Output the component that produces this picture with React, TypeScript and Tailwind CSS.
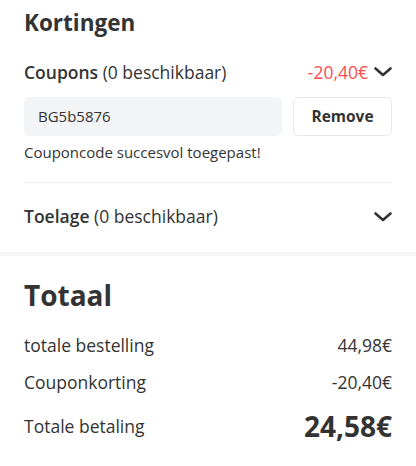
function Chevron() {
  return (
    <svg width="18" height="10" viewBox="0 0 18 10" fill="none" className="shrink-0">
      <path d="M1.5 1.5 L9 8 L16.5 1.5" stroke="#333" strokeWidth="2.6" strokeLinecap="round" strokeLinejoin="round" />
    </svg>
  )
}

export default function App() {
  return (
    <div className="w-[416px] bg-white text-[#333] font-['Open_Sans',sans-serif]">
      <div className="px-6 pt-2">
        <h2 className="text-[22.5px] font-bold leading-[30px]">Kortingen</h2>

        <div className="mt-[22px] flex items-center justify-between h-6">
          <p className="text-[17.5px]">
            <span className="font-semibold">Coupons</span> (0 beschikbaar)
          </p>
          <div className="flex items-center gap-[6px]">
            <span className="text-[17.5px] text-[#ff4d4f]">-20,40€</span>
            <Chevron />
          </div>
        </div>

        <div className="mt-[13px] flex gap-[11px]">
          <div className="flex-1 h-[39px] rounded-md bg-[#f3f4f6] flex items-center px-3.5 text-[15px]">
            BG5b5876
          </div>
          <button className="w-[99px] h-[39px] rounded-md border border-[#e5e7eb] bg-white text-[15.5px] font-bold">
            Remove
          </button>
        </div>

        <p className="mt-[6px] text-[15px] leading-5">Couponcode succesvol toegepast!</p>

        <div className="mt-[20px] border-t border-[#eeeeee]" />

        <div className="flex items-center justify-between h-[66px] pt-[1px]">
          <p className="text-[17.5px]">
            <span className="font-semibold">Toelage</span> (0 beschikbaar)
          </p>
          <Chevron />
        </div>
      </div>

      <div className="mt-[3px] h-[4px] bg-[#f5f5f5]" />

      <div className="px-6 pt-[21px] pb-6">
        <h2 className="text-[28px] font-bold leading-9">Totaal</h2>
        <div className="mt-[18px] flex items-center justify-between h-7 text-[17.5px]">
          <span>totale bestelling</span>
          <span>44,98€</span>
        </div>
        <div className="mt-[9px] flex items-center justify-between h-7 text-[17.5px]">
          <span>Couponkorting</span>
          <span>-20,40€</span>
        </div>
        <div className="mt-[10px] flex items-center justify-between h-10">
          <span className="text-[17.5px]">Totale betaling</span>
          <span className="text-[28px] font-bold">24,58€</span>
        </div>
      </div>
    </div>
  )
}
